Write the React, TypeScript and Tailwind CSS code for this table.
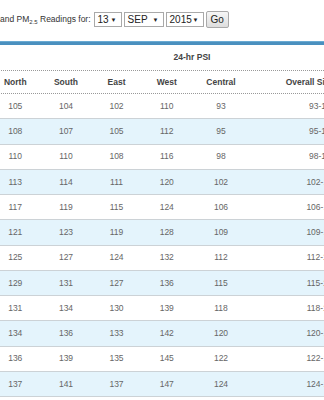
import React from "react";

const rows: number[][] = [
  [105, 104, 102, 110, 93],
  [108, 107, 105, 112, 95],
  [110, 110, 108, 116, 98],
  [113, 114, 111, 120, 102],
  [117, 119, 115, 124, 106],
  [121, 123, 119, 128, 109],
  [125, 127, 124, 132, 112],
  [129, 131, 127, 136, 115],
  [131, 134, 130, 139, 118],
  [134, 136, 133, 142, 120],
  [136, 139, 135, 145, 122],
  [137, 141, 137, 147, 124],
];

const widths = ["w-[50.5px]", "w-[51px]", "w-[50px]", "w-[50.5px]", "w-[58px]", "w-[144px]"];

function Select({ value, w }: { value: string; w: string }) {
  return (
    <div className={`${w} h-[15px] border border-[#a9a9a9] bg-white flex items-center justify-between pl-[3px] pr-[4px] text-[10px] text-[#222]`}>
      <span>{value}</span>
      <span className="text-[6px] leading-none">▼</span>
    </div>
  );
}

export default function App() {
  return (
    <div className="w-[324px] h-[400px] overflow-hidden bg-white font-['Liberation_Sans',Arial,sans-serif]">
      <div className="flex items-center h-[17px] mt-[11px] text-[8.5px] text-[#333] whitespace-nowrap">
        <span>
          and PM<sub className="text-[6px]">2.5</sub> Readings for:
        </span>
        <div className="flex items-center gap-[2px] ml-[3px]">
          <Select value="13" w="w-[28px]" />
          <Select value="SEP" w="w-[40px]" />
          <Select value="2015" w="w-[38px]" />
          <div className="w-[23px] h-[17px] border border-[#a9a9a9] rounded-[2px] bg-gradient-to-b from-[#f6f6f6] to-[#dedede] flex items-center justify-center text-[10px] text-[#222]">
            Go
          </div>
        </div>
      </div>
      <div className="ml-[-10px] w-[404px]">
        <div className="mt-[13px] h-[4px] bg-[#4a90bf] border-t border-[#6aaad2]" />
        <div className="h-[26px] flex items-center justify-center border-b border-dotted border-[#999] text-[8.5px] font-bold text-[#444]">
          24-hr PSI
        </div>
        <div className="h-[23px] flex items-center border-b border-dotted border-[#999] text-[8.5px] font-bold text-[#444]">
          {["North", "South", "East", "West", "Central", "Overall Singapore"].map((h, i) => (
            <div key={h} className={`${widths[i]} shrink-0 text-center`}>
              {h}
            </div>
          ))}
        </div>
        {rows.map((r, ri) => {
          const vals = [...r.map(String), `${Math.min(...r)}-${Math.max(...r)}`];
          return (
            <div
              key={ri}
              className={`h-[25.27px] flex items-center border-b border-[#ccd2d6] text-[8.5px] text-[#666] ${
                ri % 2 === 1 ? "bg-[#e4f4fc]" : "bg-white"
              }`}
            >
              {vals.map((v, i) => (
                <div key={i} className={`${widths[i]} shrink-0 text-center`}>
                  {v}
                </div>
              ))}
            </div>
          );
        })}
      </div>
    </div>
  );
}
